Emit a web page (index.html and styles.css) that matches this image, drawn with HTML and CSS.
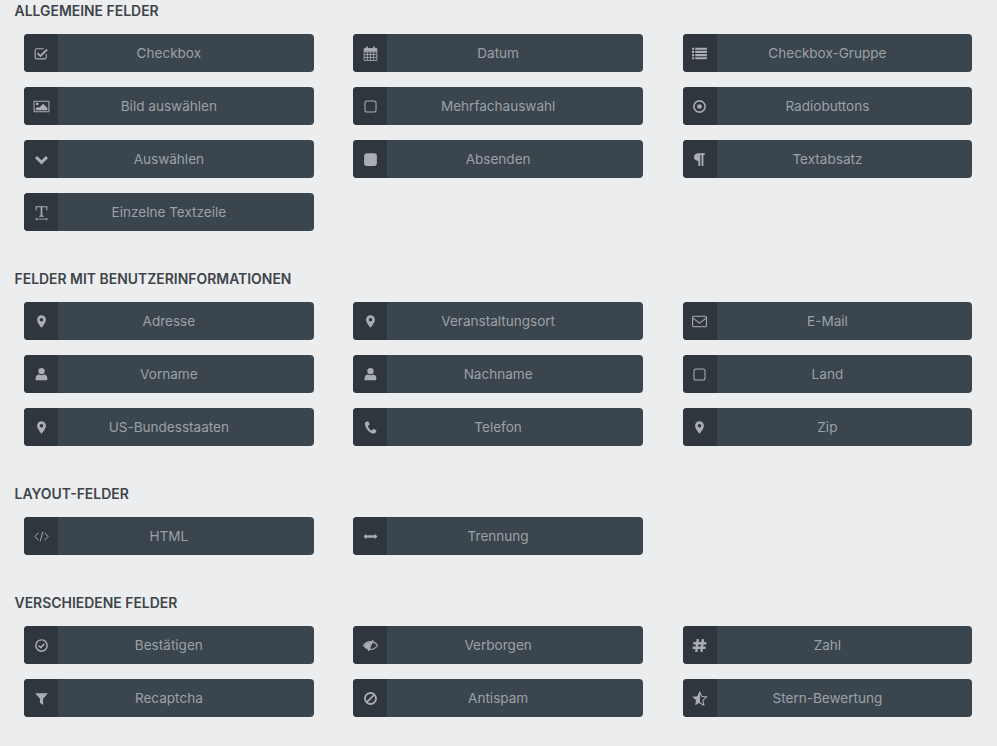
FILE: index.html
```html
<!DOCTYPE html>
<html lang="de">
<head>
<meta charset="utf-8">
<title>Felder</title>
<link rel="stylesheet" href="styles.css">
</head>
<body>
<svg class="defs" width="0" height="0" aria-hidden="true">
  <symbol id="i-check" viewBox="0 0 16 16"><path d="M12.500 8.500v3a1.500 1.500 0 0 1-1.500 1.500H3.500A1.500 1.500 0 0 1 2 11.500V5a1.500 1.500 0 0 1 1.500-1.500H10" fill="none" stroke="currentColor" stroke-width="1.100"/><path d="M4.800 7l2.200 2.200L12.600 3.600l1.300 1.300L7 11.600 3.500 8.200z" fill="currentColor"/></symbol>
  <symbol id="i-cal" viewBox="0 0 16 16"><path d="M2 3.500h12V14.500H2zM2 6.500h12M2 9h12M2 11.700h12M5 6.500v8M8 6.500v8M11 6.500v8" fill="none" stroke="currentColor" stroke-width=".8"/><path d="M2 3h12v3H2zM4 1.500h1.600V4H4zM10.400 1.500H12V4h-1.600z" fill="currentColor"/></symbol>
  <symbol id="i-list" viewBox="0 0 16 16"><path d="M1 3h2v2H1zm3 0h11v2H4zM1 6h2v2H1zm3 0h11v2H4zM1 9h2v2H1zm3 0h11v2H4zM1 12h2v2H1zm3 0h11v2H4z" fill="currentColor" transform="translate(0 -.5)"/></symbol>
  <symbol id="i-img" viewBox="0 0 16 16"><path fill-rule="evenodd" d="M.5 2.500h15v11H.5zM1.500 3.500v9h13v-9z" fill="currentColor"/><circle cx="4" cy="5.600" r="1.300" fill="currentColor"/><path d="M2.500 11.500V10l2-1.800 1.200 1L9.500 5.500l4 4v2z" fill="currentColor"/></symbol>
  <symbol id="i-box" viewBox="0 0 16 16"><rect x="2.800" y="2.800" width="10.400" height="10.400" rx="2" fill="none" stroke="currentColor" stroke-width="1"/></symbol>
  <symbol id="i-radio" viewBox="0 0 16 16"><circle cx="8" cy="8" r="5.300" fill="none" stroke="currentColor" stroke-width="1.500"/><circle cx="8" cy="8" r="2.200" fill="currentColor"/></symbol>
  <symbol id="i-chev" viewBox="0 0 16 16"><path d="M1.800 6.200 3.900 4.300 8 8.400l4.100-4.100 2.100 1.900L8 12.300z" fill="currentColor" transform="translate(0 .4)"/></symbol>
  <symbol id="i-stop" viewBox="0 0 16 16"><rect x="2" y="2" width="12" height="12" rx="2.500" fill="currentColor"/></symbol>
  <symbol id="i-para" viewBox="0 0 16 16"><path d="M13 2v1.800h-1.300V14H9.900V3.800H8.700V14H6.900V9.400C4.500 9.300 2.800 8 2.800 5.700 2.800 3.400 4.600 2 7.300 2z" fill="currentColor"/></symbol>
  <symbol id="i-text" viewBox="0 0 16 16"><path d="M2.500 6V2h11v4h-.8l-.4-2.900H8.800v7.800l1.500.4v.7H5.700v-.7l1.500-.4V3.100H3.700L3.300 6z" fill="currentColor"/><path d="M2 14.200h12M3.500 13v2.400M12.500 13v2.400" stroke="currentColor" stroke-width=".8" fill="none"/></symbol>
  <symbol id="i-pin" viewBox="0 0 16 16"><path fill-rule="evenodd" d="M8 2.100A4.200 4.200 0 0 0 3.800 6.300c0 2.300 2.400 5.500 4.200 7.600 1.800-2.100 4.200-5.300 4.200-7.600A4.200 4.200 0 0 0 8 2.100zm0 2.500a1.700 1.700 0 1 1 0 3.400 1.700 1.700 0 0 1 0-3.400z" fill="currentColor"/></symbol>
  <symbol id="i-mail" viewBox="0 0 16 16"><rect x="1.500" y="3" width="13" height="10" rx="1" fill="none" stroke="currentColor" stroke-width="1"/><path d="M1.800 4.800 8 9.500l6.200-4.700" fill="none" stroke="currentColor" stroke-width="1"/></symbol>
  <symbol id="i-user" viewBox="0 0 16 16"><circle cx="8" cy="4.800" r="3" fill="currentColor"/><path d="M2.500 12.500v-1.300C2.500 9.300 4 8 5.700 8c.6.500 1.400.8 2.300.8s1.700-.3 2.300-.8c1.700 0 3.200 1.300 3.200 3.200v1.300a1 1 0 0 1-1 1h-9.500a1 1 0 0 1-1-1z" fill="currentColor"/></symbol>
  <symbol id="i-phone" viewBox="0 0 16 16"><path d="M5.100 2.200 3.300 3C2.500 3.500 2.600 5 3.300 7c1 2.800 3.200 5.200 5.800 6.300 1.500.6 3 .6 3.500-.2l.9-1.700c.1-.3 0-.5-.2-.7l-2.100-1.300c-.3-.2-.5-.1-.7.1l-1 1.200c-.2.2-.4.2-.6.1-1.500-.8-2.800-2.300-3.300-3.900 0-.2 0-.4.200-.5l1.200-.9c.2-.2.300-.4.200-.7L6 2.500c-.2-.4-.5-.5-.9-.3z" fill="currentColor"/></symbol>
  <symbol id="i-code" viewBox="0 0 16 16"><path d="M5 4.500 1.800 8 5 11.500M11 4.500 14.200 8 11 11.500M9.200 3.500 6.800 12.500" fill="none" stroke="currentColor" stroke-width=".9"/></symbol>
  <symbol id="i-arrows" viewBox="0 0 16 16"><path d="M1.500 8 3.900 5.500v1.400h8.200V5.500L14.500 8l-2.400 2.500V9.100H3.900v1.400z" fill="currentColor"/></symbol>
  <symbol id="i-ok" viewBox="0 0 16 16"><circle cx="8" cy="8" r="5.300" fill="none" stroke="currentColor" stroke-width="1.400"/><path d="M5.400 8 7.300 9.900 10.700 6.400" fill="none" stroke="currentColor" stroke-width="1.500"/></symbol>
  <symbol id="i-eye" viewBox="0 0 16 16"><path d="M1.300 8C3 5.700 5.200 4.300 8 4.300s5 1.400 6.700 3.700C13 10.300 10.800 11.700 8 11.700S3 10.300 1.300 8z" fill="none" stroke="currentColor" stroke-width="1.100"/><path d="M9.300 4.400 7.800 8 6.500 11.600 5 11c-1.200-.6-2.200-1.600-2.600-3C3.200 6.600 5.500 5 8 4.800z" fill="currentColor"/><path d="M10.500 2.800 6 13.200" fill="none" stroke="currentColor" stroke-width="1.200"/></symbol>
  <symbol id="i-hash" viewBox="0 0 16 16"><path d="M6.400 2 5 14M11.200 2 9.800 14M2.200 5.800h12.300M1.500 10.200h12.300" fill="none" stroke="currentColor" stroke-width="2.300"/></symbol>
  <symbol id="i-filter" viewBox="0 0 16 16"><path d="M2 3h12L9.500 8.200V14l-3-2V8.200z" fill="currentColor"/></symbol>
  <symbol id="i-ban" viewBox="0 0 16 16"><circle cx="8" cy="8" r="5.200" fill="none" stroke="currentColor" stroke-width="1.700"/><path d="M4.500 11.500l7-7" stroke="currentColor" stroke-width="1.700"/></symbol>
  <symbol id="i-star" viewBox="0 0 16 16"><path d="M8 1.500l2 4.300 4.700.6-3.500 3.200.9 4.700L8 12z" fill="none" stroke="currentColor" stroke-width="1"/><path d="M8 1.500v10.500l-4.100 2.300.9-4.700L1.300 6.400 6 5.800z" fill="currentColor"/></symbol>
</svg>

<section class="group">
  <h2 class="title">Allgemeine Felder</h2>
  <div class="grid">
    <button class="field"><span class="ico"><svg><use href="#i-check"/></svg></span><span class="lbl">Checkbox</span></button>
    <button class="field"><span class="ico"><svg><use href="#i-cal"/></svg></span><span class="lbl">Datum</span></button>
    <button class="field"><span class="ico"><svg><use href="#i-list"/></svg></span><span class="lbl">Checkbox-Gruppe</span></button>
    <button class="field"><span class="ico"><svg><use href="#i-img"/></svg></span><span class="lbl">Bild auswählen</span></button>
    <button class="field"><span class="ico"><svg><use href="#i-box"/></svg></span><span class="lbl">Mehrfachauswahl</span></button>
    <button class="field"><span class="ico"><svg><use href="#i-radio"/></svg></span><span class="lbl">Radiobuttons</span></button>
    <button class="field"><span class="ico"><svg><use href="#i-chev"/></svg></span><span class="lbl">Auswählen</span></button>
    <button class="field"><span class="ico"><svg><use href="#i-stop"/></svg></span><span class="lbl">Absenden</span></button>
    <button class="field"><span class="ico"><svg><use href="#i-para"/></svg></span><span class="lbl">Textabsatz</span></button>
    <button class="field"><span class="ico"><svg><use href="#i-text"/></svg></span><span class="lbl">Einzelne Textzeile</span></button>
  </div>
</section>

<section class="group">
  <h2 class="title">Felder mit Benutzerinformationen</h2>
  <div class="grid">
    <button class="field"><span class="ico"><svg><use href="#i-pin"/></svg></span><span class="lbl">Adresse</span></button>
    <button class="field"><span class="ico"><svg><use href="#i-pin"/></svg></span><span class="lbl">Veranstaltungsort</span></button>
    <button class="field"><span class="ico"><svg><use href="#i-mail"/></svg></span><span class="lbl">E-Mail</span></button>
    <button class="field"><span class="ico"><svg><use href="#i-user"/></svg></span><span class="lbl">Vorname</span></button>
    <button class="field"><span class="ico"><svg><use href="#i-user"/></svg></span><span class="lbl">Nachname</span></button>
    <button class="field"><span class="ico"><svg><use href="#i-box"/></svg></span><span class="lbl">Land</span></button>
    <button class="field"><span class="ico"><svg><use href="#i-pin"/></svg></span><span class="lbl">US-Bundesstaaten</span></button>
    <button class="field"><span class="ico"><svg><use href="#i-phone"/></svg></span><span class="lbl">Telefon</span></button>
    <button class="field"><span class="ico"><svg><use href="#i-pin"/></svg></span><span class="lbl">Zip</span></button>
  </div>
</section>

<section class="group">
  <h2 class="title">Layout-Felder</h2>
  <div class="grid">
    <button class="field"><span class="ico"><svg><use href="#i-code"/></svg></span><span class="lbl">HTML</span></button>
    <button class="field"><span class="ico"><svg><use href="#i-arrows"/></svg></span><span class="lbl">Trennung</span></button>
  </div>
</section>

<section class="group">
  <h2 class="title">Verschiedene Felder</h2>
  <div class="grid">
    <button class="field"><span class="ico"><svg><use href="#i-ok"/></svg></span><span class="lbl">Bestätigen</span></button>
    <button class="field"><span class="ico"><svg><use href="#i-eye"/></svg></span><span class="lbl">Verborgen</span></button>
    <button class="field"><span class="ico"><svg><use href="#i-hash"/></svg></span><span class="lbl">Zahl</span></button>
    <button class="field"><span class="ico"><svg><use href="#i-filter"/></svg></span><span class="lbl">Recaptcha</span></button>
    <button class="field"><span class="ico"><svg><use href="#i-ban"/></svg></span><span class="lbl">Antispam</span></button>
    <button class="field"><span class="ico"><svg><use href="#i-star"/></svg></span><span class="lbl">Stern-Bewertung</span></button>
  </div>
</section>
</body>
</html>
```
FILE: styles.css
```css
* { box-sizing: border-box; }
html, body { margin: 0; padding: 0; }
body {
  background: #ebedef;
  font-family: Inter, "Liberation Sans", sans-serif;
  padding: 0 25px 0 14.5px;
  height: 746px;
  overflow: hidden;
}
.defs { position: absolute; }
.group { margin-bottom: 37px; }
.title {
  margin: 0 0 12px;
  font-size: 13.95px;
  line-height: 22px;
  font-weight: 600;
  text-transform: uppercase;
  color: #3f4449;
}
.grid {
  display: grid;
  grid-template-columns: repeat(3, 289.7px);
  column-gap: 39.6px;
  row-gap: 15px;
  padding-left: 9.5px;
}
.field {
  display: flex;
  align-items: stretch;
  height: 38px;
  padding: 0;
  border: 0;
  border-radius: 4px;
  overflow: hidden;
  background: #3b454e;
  color: #9ca1a6;
  font: inherit;
}
.ico {
  flex: 0 0 34px;
  display: flex;
  align-items: center;
  justify-content: center;
  background: #30363d;
  color: #aaadb1;
}
.ico svg { width: 17px; height: 17px; }
.lbl {
  flex: 1;
  align-self: center;
  padding-right: 34px;
  text-align: center;
  font-size: 13.55px;
  line-height: 20px;
}
```
